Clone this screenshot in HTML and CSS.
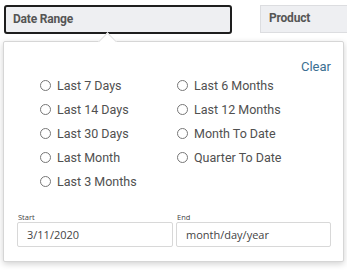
FILE: index.html
```html
<!DOCTYPE html>
<html>
<head>
    <title>Date Range Filter</title>
    <link rel="stylesheet" href="styles.css">
</head>
<body>
    <div class="filters">
        <div class="filter active">Date Range</div>
        <div class="filter product">Product</div>
    </div>

    <div class="popover">
        <div class="arrow"></div>
        <div class="clear-row"><a class="clear" href="#">Clear</a></div>
        <div class="options">
            <label class="option"><span class="radio"></span>Last 7 Days</label>
            <label class="option"><span class="radio"></span>Last 6 Months</label>
            <label class="option"><span class="radio"></span>Last 14 Days</label>
            <label class="option"><span class="radio"></span>Last 12 Months</label>
            <label class="option"><span class="radio"></span>Last 30 Days</label>
            <label class="option"><span class="radio"></span>Month To Date</label>
            <label class="option"><span class="radio"></span>Last Month</label>
            <label class="option"><span class="radio"></span>Quarter To Date</label>
            <label class="option"><span class="radio"></span>Last 3 Months</label>
        </div>
        <div class="dates">
            <div class="field">
                <span class="field-label">Start</span>
                <div class="field-input">3/11/2020</div>
            </div>
            <div class="field">
                <span class="field-label">End</span>
                <div class="field-input">month/day/year</div>
            </div>
        </div>
    </div>
</body>
</html>
```

FILE: styles.css
```css
body {
    margin: 0;
    background-color: #fff;
    font-family: "Open Sans", "Liberation Sans", sans-serif;
    width: 347px;
    height: 270px;
    overflow: hidden;
    position: relative;
}

.filters {
    display: flex;
    padding: 5px 0 0 4px;
}

.filter {
    box-sizing: border-box;
    flex-shrink: 0;
    height: 29px;
    background-color: #eeeff2;
    font-family: "Roboto", sans-serif;
    font-weight: bold;
    font-size: 12px;
    letter-spacing: -0.2px;
    color: #555;
    padding: 5px 0 0 7px;
    border-radius: 3px;
}

.filter.active {
    width: 228px;
    border: 2px solid #1e1e1e;
}

.filter.product {
    width: 100px;
    margin-left: 28px;
    height: 28px;
    border: 1px solid #dcdde0;
    border-radius: 0;
    padding: 5px 0 0 8px;
}

.popover {
    position: absolute;
    left: 3px;
    top: 41px;
    width: 341px;
    height: 221px;
    box-sizing: border-box;
    background: #fff;
    border: 1px solid #d6d6d6;
    border-radius: 2px;
    box-shadow: 0 2px 6px rgba(0, 0, 0, 0.18);
}

.arrow {
    position: absolute;
    left: 97px;
    top: -7px;
    width: 12px;
    height: 12px;
    background: #fff;
    border-left: 1px solid #e2e2e2;
    border-top: 1px solid #e2e2e2;
    transform: rotate(45deg);
}

.clear-row {
    display: flex;
    justify-content: flex-end;
    padding: 17px 12px 0 0;
    height: 15px;
}

.clear {
    color: #3b6f92;
    text-decoration: none;
    font-family: "Roboto", sans-serif;
    font-size: 13px;
}

.options {
    display: grid;
    grid-template-columns: 137px 137px;
    padding: 0 0 0 36px;
    margin-top: -1px;
}

.option {
    display: flex;
    align-items: center;
    height: 24.2px;
    font-family: "Roboto", sans-serif;
    font-size: 12.5px;
    color: #505050;
}

.radio {
    box-sizing: border-box;
    width: 11px;
    height: 11px;
    border: 1px solid #777;
    border-radius: 50%;
    margin-right: 6px;
}

.dates {
    display: flex;
    gap: 3px;
    padding: 18px 0 0 13px;
}

.field {
    display: flex;
    flex-direction: column;
}

.field-label {
    font-size: 7.5px;
    color: #444;
    height: 10px;
    padding-left: 1px;
}

.field-input {
    box-sizing: border-box;
    width: 156px;
    height: 25px;
    border: 1px solid #d8d8d8;
    border-radius: 2px;
    font-size: 11px;
    color: #444;
    padding-top: 4px;
    padding-left: 9px;
}

.field + .field .field-input {
    width: 155px;
}
```
